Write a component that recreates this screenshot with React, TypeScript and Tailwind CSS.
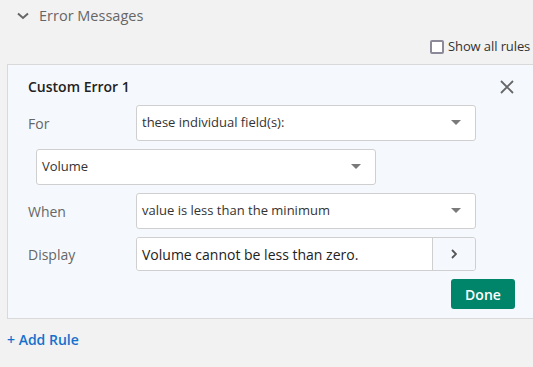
import React from "react";

function Caret() {
  return (
    <svg width="10" height="6" viewBox="0 0 10 6" className="shrink-0">
      <path d="M0 0 L10 0 L5 5 Z" fill="#7a7a7a" />
    </svg>
  );
}

function Select({ text, className }: { text: string; className: string }) {
  return (
    <div
      className={`flex items-center justify-between bg-white border border-[#cfcfcf] rounded-[3px] pl-[5px] pr-[14px] ${className}`}
    >
      <span className="text-[13px] text-[#333]">{text}</span>
      <Caret />
    </div>
  );
}

export default function App() {
  return (
    <div
      className="w-[533px] h-[367px] overflow-hidden bg-[#f2f2f2]"
      style={{ fontFamily: '"Open Sans", "Noto Sans", sans-serif' }}
    >
      <div className="w-[560px]">
        <div className="flex items-center h-[32px] pl-[17px] gap-[10px]">
          <svg width="12" height="8" viewBox="0 0 12 8">
            <path d="M1 1.5 L6 6 L11 1.5" fill="none" stroke="#666" strokeWidth="2" />
          </svg>
          <span className="text-[14.5px] text-[#666]">Error Messages</span>
        </div>
        <div className="flex items-center h-[22px] mt-[4px] pl-[430px] gap-[4px]">
          <div className="w-[14px] h-[14px] border-2 border-[#8c8a99] rounded-[2px] bg-white shrink-0" />
          <span className="text-[13px] tracking-[-0.1px] text-[#333] whitespace-nowrap">Show all rules</span>
        </div>
        <div className="ml-[7px] mt-[6px] border border-[#d9d9d9] bg-[#f5f9fd] pl-[20px] pt-[11px] pb-[9px] w-[540px]">
          <div className="w-[487px] flex flex-col">
            <div className="flex items-center justify-between h-[21px]">
              <span className="text-[14px] font-semibold text-[#222]">Custom Error 1</span>
              <svg width="14" height="14" viewBox="0 0 14 14" className="mr-[1px]">
                <path d="M1 1 L13 13 M13 1 L1 13" stroke="#666" strokeWidth="1.8" />
              </svg>
            </div>
            <div className="flex items-center mt-[8px]">
              <span className="w-[108px] text-[14px] text-[#666]">For</span>
              <Select text="these individual field(s):" className="w-[340px] h-[36px]" />
            </div>
            <div className="flex items-center mt-[8px] pl-[8px]">
              <Select text="Volume" className="w-[340px] h-[36px]" />
            </div>
            <div className="flex items-center mt-[8px]">
              <span className="w-[108px] text-[14px] text-[#666]">When</span>
              <Select text="value is less than the minimum" className="w-[340px] h-[36px]" />
            </div>
            <div className="flex items-center mt-[8px]">
              <span className="w-[108px] text-[14px] text-[#666]">Display</span>
              <div className="flex w-[340px] h-[34px] border border-[#cfcfcf] rounded-[3px] overflow-hidden">
                <div className="flex-1 bg-white flex items-center pl-[5px] text-[14px] text-[#222]">
                  Volume cannot be less than zero.
                </div>
                <div className="w-[43px] border-l border-[#cfcfcf] bg-[#f5f9fd] flex items-center justify-center">
                  <svg width="6" height="10" viewBox="0 0 6 10">
                    <path d="M1 1 L5 5 L1 9" fill="none" stroke="#555" strokeWidth="1.8" />
                  </svg>
                </div>
              </div>
            </div>
            <div className="flex justify-end mt-[8px]">
              <button className="w-[64px] h-[30px] rounded-[3px] bg-[#00856a] text-white text-[14px] font-semibold">
                Done
              </button>
            </div>
          </div>
        </div>
        <div className="pl-[7px] mt-[10px] text-[14px] font-semibold text-[#1570cc]">+ Add Rule</div>
      </div>
    </div>
  );
}
